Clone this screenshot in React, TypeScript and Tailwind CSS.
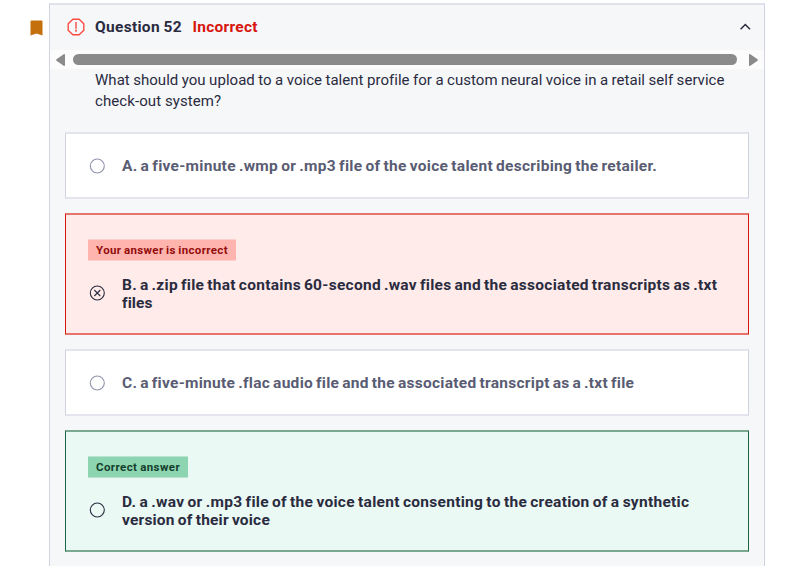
import type { ReactNode } from "react";

function Radio({ crossed = false, className }: { crossed?: boolean; className: string }) {
  return (
    <svg width="16" height="16" viewBox="0 0 16 16" fill="none" stroke="currentColor" className={`shrink-0 ${className}`}>
      <circle cx="8.3" cy="8" r="7" strokeWidth="1.1" />
      {crossed && <path d="M5.3 5l6 6M11.3 5l-6 6" strokeWidth="1.1" />}
    </svg>
  );
}

function Line({ children, className }: { children: ReactNode; className: string }) {
  return <span className={`block whitespace-nowrap ${className}`}>{children}</span>;
}

function PlainAnswer({ children }: { children: ReactNode }) {
  return (
    <div className="flex h-[67px] items-center border-x border-y-2 border-x-[#d1d2e0] border-y-[#e3e4ed] bg-white pl-[23px]">
      <Radio className="mt-px text-[#9194ac]" />
      <p className="ml-[17px] text-[15.5px] leading-[18px] font-bold text-[#595c73]">{children}</p>
    </div>
  );
}

function Question() {
  return (
    <section className="mt-[3px] flex h-[563px] w-[716px] flex-col border-x border-t-2 border-x-[#d1d2e0] border-t-[#e0e1ea] bg-[#f6f7f9]">
      <header className="flex h-[45px] items-center pr-3 pl-[17px] text-[15.5px] leading-5 font-bold">
        <svg width="18" height="18" viewBox="0 0 18 18" fill="none" stroke="#fa4b41" strokeWidth="1.4" className="-mt-px mr-[10px]">
          <path d="M5.8 1.2h6.4l4.6 4.6v6.4l-4.6 4.6H5.8l-4.6-4.6V5.8z" strokeLinejoin="round" />
          <path d="M9 4.5v5.7" strokeLinecap="round" />
          <circle cx="9" cy="12.7" r="0.4" />
        </svg>
        <h2 className="-mt-px w-[97.500px] tracking-[0.3px] whitespace-nowrap text-[#2a2b3f] [word-spacing:-0.5px]">Question 52</h2>
        <span className="-mt-px tracking-[0.25px] text-[#d6150d]">Incorrect</span>
        <svg width="14" height="14" viewBox="0 0 14 14" fill="none" stroke="#2a2b3f" strokeWidth="1.5" className="-mt-px ml-auto">
          <path d="M2.6 9.200L7.300 4.500l4.700 4.700" />
        </svg>
      </header>
      <div className="flex h-[19px] shrink-0 items-center bg-[#fcfcfc] px-[6px]">
        <svg width="9" height="12" viewBox="0 0 9 12" fill="#8b8b8b" className="mt-px">
          <path d="M9 1v10q0 1.500-1.400.7L.5 6.800Q-.3 6 .5 5.200L7.600.3Q9-.5 9 1z" />
        </svg>
        <div className="ml-2 h-[11px] w-[664px] rounded-full bg-[#8b8b8b]" />
        <svg width="9" height="12" viewBox="0 0 9 12" fill="#8b8b8b" className="mt-px ml-3">
          <path d="M0 1v10q0 1.500 1.400.7L8.500 6.800Q9.300 6 8.500 5.200L1.400.3Q0-.5 0 1z" />
        </svg>
      </div>
      <p className="ml-[45px] pt-px text-[15px] leading-[21px] text-[#2a2b3f]">
        <Line className="tracking-[0.03px] [word-spacing:-0.3px]">What should you upload to a voice talent profile for a custom neural voice in a retail self service</Line>
        <Line className="tracking-[0.08px]">check-out system?</Line>
      </p>
      <div className="mt-5 ml-[15px] flex w-[684px] flex-col gap-[14px]">
        <PlainAnswer>
          <Line className="tracking-[0.28px] [word-spacing:-1px]">A. a five-minute .wmp or .mp3 file of the voice talent describing the retailer.</Line>
        </PlainAnswer>
        <div className="h-[122px] border-x border-y-2 border-x-[#d6150d] border-y-[#e6736d] bg-[#ffebe9] pt-6 pl-[22px]">
          <span className="flex h-[22px] w-[148px] border-y border-[#ffd0cb] bg-[#ffb5ae] pl-2 text-[11.5px] leading-[21px] font-bold tracking-[0.37px] whitespace-nowrap text-[#930c0c] [word-spacing:-0.7px]">Your answer is incorrect</span>
          <div className="mt-[15px] flex items-center pl-px">
            <Radio crossed className="-mt-0.5 text-[#2a2b3f]" />
            <p className="ml-[17px] text-[15.5px] leading-[18px] font-bold text-[#2a2b3f]">
              <Line className="tracking-[0.28px] [word-spacing:-1.1px]">B. a .zip file that contains 60-second .wav files and the associated transcripts as .txt</Line>
              <Line className="tracking-[0.1px]">files</Line>
            </p>
          </div>
        </div>
        <PlainAnswer>
          <Line className="tracking-[0.28px] [word-spacing:-1.15px]">C. a five-minute .flac audio file and the associated transcript as a .txt file</Line>
        </PlainAnswer>
        <div className="h-[122px] border-x border-y-2 border-x-[#1b6443] border-y-[#7ba890] bg-[#eaf9f4] pt-6 pl-[22px]">
          <span className="flex h-[22px] w-[100px] border-y border-[#b9e5d0] bg-[#8cd5b0] pl-2 text-[11.5px] leading-[21px] font-bold tracking-[0.42px] whitespace-nowrap text-[#153d2b] [word-spacing:-0.5px]">Correct answer</span>
          <div className="mt-[15px] flex items-center pl-px">
            <Radio className="-mt-0.5 text-[#2a2b3f]" />
            <p className="ml-[17px] text-[15.5px] leading-[18px] font-bold text-[#2a2b3f]">
              <Line className="tracking-[0.28px] [word-spacing:-0.92px]">D. a .wav or .mp3 file of the voice talent consenting to the creation of a synthetic</Line>
              <Line className="tracking-[0.2px] [word-spacing:-0.9px]">version of their voice</Line>
            </p>
          </div>
        </div>
      </div>
    </section>
  );
}

export default function App() {
  return (
    <main className="flex h-[566px] w-[812px] overflow-hidden bg-white font-[Roboto,sans-serif]">
      <svg width="13" height="16" viewBox="0 0 13 16" fill="#c4710d" className="mt-5 mr-[6px] ml-[30px] shrink-0">
        <path d="M1.500.5h10Q12.500.5 12.500 1.500V15.500L6.500 13.500.5 15.500v-14Q.5.500 1.500.5z" />
      </svg>
      <Question />
    </main>
  );
}
